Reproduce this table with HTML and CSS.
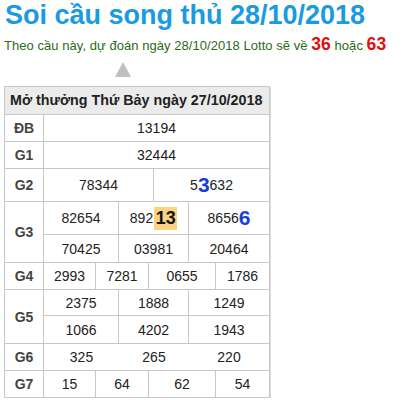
FILE: index.html
```html
<!DOCTYPE html>
<html lang="vi">
<head>
<meta charset="utf-8">
<title>Soi cầu song thủ</title>
<link rel="stylesheet" href="styles.css">
</head>
<body>
<div class="page">
  <h1 class="title">Soi cầu song thủ 28/10/2018</h1>
  <p class="lead">Theo cầu này, dự đoán ngày 28/10/2018 Lotto sẽ về <b class="hot">36</b> hoặc <b class="hot">63</b></p>
  <div class="arrow"></div>
  <div class="board">
    <div class="head">Mở thưởng Thứ Bảy ngày 27/10/2018</div>

    <div class="prize r1">
      <div class="lbl">ĐB</div>
      <div class="cells c1"><span>13194</span></div>
    </div>
    <div class="prize r1">
      <div class="lbl">G1</div>
      <div class="cells c1"><span>32444</span></div>
    </div>
    <div class="prize r1 tall">
      <div class="lbl">G2</div>
      <div class="cells c2"><span>78344</span><span>5<b class="pick">3</b>632</span></div>
    </div>
    <div class="prize r2 tall-first">
      <div class="lbl">G3</div>
      <div class="cells c3">
        <span>82654</span><span>892<b class="mark">13</b></span><span>8656<b class="pick">6</b></span>
        <span>70425</span><span>03981</span><span>20464</span>
      </div>
    </div>
    <div class="prize r1">
      <div class="lbl">G4</div>
      <div class="cells c4"><span>2993</span><span>7281</span><span>0655</span><span>1786</span></div>
    </div>
    <div class="prize r2">
      <div class="lbl">G5</div>
      <div class="cells c3">
        <span>2375</span><span>1888</span><span>1249</span>
        <span>1066</span><span>4202</span><span>1943</span>
      </div>
    </div>
    <div class="prize r1">
      <div class="lbl">G6</div>
      <div class="cells c3 plain"><span>325</span><span>265</span><span>220</span></div>
    </div>
    <div class="prize r1 last">
      <div class="lbl">G7</div>
      <div class="cells c4"><span>15</span><span>64</span><span>62</span><span>54</span></div>
    </div>
  </div>
</div>
</body>
</html>
```
FILE: styles.css
```css
* { box-sizing: border-box; }
html, body { margin: 0; padding: 0; background: #fff; }
body { font-family: Arial, "Liberation Sans", sans-serif; color: #222; }

.page { padding: 0 0 0 4px; }

.title {
  margin: 0;
  font-size: 27px;
  line-height: 30px;
  font-weight: bold;
  color: #1a9ae0;
  padding-left: 1px;
}

.lead {
  margin: 4px 0 0 0;
  font-size: 13px;
  line-height: 20px;
  color: #2b6a18;
  letter-spacing: 0.05px;
}
.hot { color: #e01010; font-size: 17.5px; }

.arrow {
  width: 0; height: 0;
  margin: 6px 0 0 111px;
  border-left: 8.5px solid transparent;
  border-right: 8.5px solid transparent;
  border-bottom: 15px solid #c0c0c0;
}

.board {
  margin-top: 9px;
  width: 266px;
  border: 1px solid #c8c8c8;
  box-shadow: 1px 1px 0 #dcdcdc;
  font-size: 14px;
}

.head {
  height: 28px;
  line-height: 27px;
  background: #ebebeb;
  font-weight: bold;
  color: #222;
  font-size: 14.3px;
  padding-left: 5px;
  border-bottom: 1px solid #c8c8c8;
}

.prize {
  display: grid;
  grid-template-columns: 39px 1fr;
  border-bottom: 1px solid #c8c8c8;
}
.prize.last { border-bottom: 0; }

.lbl {
  display: flex;
  align-items: center;
  justify-content: center;
  font-weight: bold;
  color: #444;
  border-right: 1px solid #c8c8c8;
}

.cells { display: grid; }
.cells span {
  display: flex;
  align-items: center;
  justify-content: center;
  height: 26px;
  color: #222;
}
.r1 .cells span { height: 26px; }
.tall .cells span { height: 32px; }
.r2 .cells { grid-template-rows: 26px 27px; }
.r2 .cells span { height: auto; }
.r2 .cells span:nth-child(-n+3) { border-bottom: 1px solid #c8c8c8; }
.tall-first .cells { grid-template-rows: 33px 27px; }

.c1 { grid-template-columns: 1fr; }
.c2 { grid-template-columns: 110px 1fr; }
.c3 { grid-template-columns: 75px 70px 1fr; }
.c4 { grid-template-columns: 52px 53px 67px 1fr; }

.c2 span:nth-child(1),
.c3 span:nth-child(3n+1),
.c3 span:nth-child(3n+2),
.c4 span:not(:last-child) { border-right: 1px solid #c8c8c8; }
.plain span { border-right: 0 !important; }

.pick { color: #1a3fd6; font-size: 21px; }
.mark {
  display: inline-flex;
  align-items: center;
  justify-content: center;
  background: #fcd283;
  color: #111;
  font-size: 18px;
  width: 23px;
  height: 23px;
  margin-left: 1px;
}
```
